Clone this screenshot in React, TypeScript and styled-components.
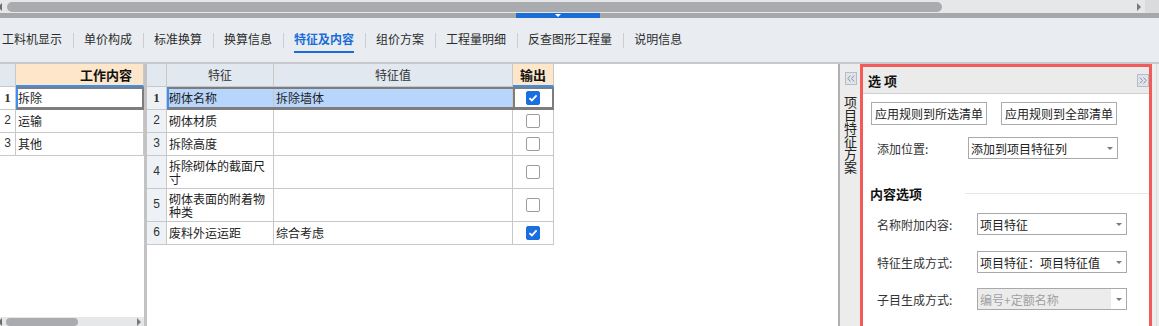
import React from 'react';
import styled, { createGlobalStyle, css } from 'styled-components';

const GlobalStyle = createGlobalStyle`
  html, body { margin: 0; padding: 0; background: #fff; }
  body {
    font-family: "Noto Sans CJK SC", "Noto Sans", sans-serif;
    color: #222;
  }
`;

const tabs = ['工料机显示', '单价构成', '标准换算', '换算信息', '特征及内容', '组价方案', '工程量明细', '反查图形工程量', '说明信息'];

const workRows = ['拆除', '运输', '其他'];

const features = [
  { name: '砌体名称', value: '拆除墙体', out: true, h: 23 },
  { name: '砌体材质', value: '', out: false, h: 23 },
  { name: '拆除高度', value: '', out: false, h: 23 },
  { name: '拆除砌体的截面尺寸', value: '', out: false, h: 33 },
  { name: '砌体表面的附着物种类', value: '', out: false, h: 33 },
  { name: '废料外运运距', value: '综合考虑', out: true, h: 23 },
];

const Screen = styled.div`
  width: 1159px;
  height: 326px;
  overflow: hidden;
  display: flex;
  flex-direction: column;
  background: #fff;
`;

/* ---------- top scroll + splitter ---------- */

const TopScroll = styled.div`
  height: 13px;
  flex: none;
  display: flex;
  align-items: center;
  background: #e6e7e9;
`;

const ArrowLeft = styled.span`
  width: 0;
  height: 0;
  margin-left: -2px;
  border-top: 4px solid transparent;
  border-bottom: 4px solid transparent;
  border-right: 4px solid #6c6c6c;
`;

const ArrowRight = styled.span`
  width: 0;
  height: 0;
  border-top: 4px solid transparent;
  border-bottom: 4px solid transparent;
  border-left: 4px solid #7a7a7a;
`;

const Thumb = styled.div<{ $w: number; $ml: number }>`
  width: ${p => p.$w}px;
  margin-left: ${p => p.$ml}px;
  height: 10px;
  border-radius: 5px;
  background: #a9abae;
`;

const Fill = styled.div`
  flex: 1;
`;

const Corner = styled.div`
  width: 14px;
  height: 100%;
  margin-left: 4px;
  background: #dadbdd;
`;

const Splitter = styled.div`
  height: 5px;
  flex: none;
  background: #a6a7a9;
  padding-left: 516px;
  display: flex;
`;

const Grip = styled.div`
  width: 84px;
  background: #1a6dd6;
  display: flex;
  justify-content: center;
  align-items: center;
`;

const GripTri = styled.span`
  width: 0;
  height: 0;
  border-left: 3px solid transparent;
  border-right: 3px solid transparent;
  border-top: 3px solid #fff;
`;

/* ---------- tabs ---------- */

const TabBar = styled.div`
  height: 44px;
  flex: none;
  background: #e9edf1;
  display: flex;
  align-items: flex-start;
  padding-left: 2px;
  border-bottom: 2px solid #c8c9cc;
`;

const Tab = styled.div<{ $first?: boolean }>`
  padding: 14px 11px 0 ${p => (p.$first ? 0 : 10)}px;
`;

const TabLabel = styled.span<{ $active?: boolean }>`
  display: block;
  font-size: 12px;
  line-height: 14px;
  padding-bottom: 5px;
  white-space: nowrap;
  color: ${p => (p.$active ? '#1a6dd6' : '#2b2b2b')};
  font-weight: ${p => (p.$active ? 600 : 400)};
  border-bottom: 2px solid ${p => (p.$active ? '#1a6dd6' : 'transparent')};
`;

const TabSep = styled.span`
  width: 1px;
  height: 15px;
  margin-top: 15px;
  background: #c9ced4;
`;

/* ---------- main area ---------- */

const Main = styled.div`
  flex: 1;
  display: flex;
  min-height: 0;
`;

const LeftPane = styled.div`
  width: 144px;
  flex: none;
  display: flex;
  flex-direction: column;
`;

const VDivider = styled.div<{ $w: number; $c: string }>`
  width: ${p => p.$w}px;
  flex: none;
  background: ${p => p.$c};
`;

const MidPane = styled.div`
  width: 691px;
  flex: none;
  display: flex;
  flex-direction: column;
`;

const Row = styled.div<{ $h: number }>`
  display: flex;
  height: ${p => p.$h}px;
  flex: none;
`;

const Group = styled.div<{ $selected?: boolean }>`
  display: flex;
  position: relative;
  ${p =>
    p.$selected &&
    css`
      &::after {
        content: '';
        position: absolute;
        inset: 0;
        border: 2px solid #7d7d7d;
        border-left-color: #3d8ff0;
        border-bottom-width: 3px;
        pointer-events: none;
      }
    `}
`;

const Cell = styled.div<{ $w: number; $bg?: string; $center?: boolean }>`
  box-sizing: border-box;
  width: ${p => p.$w}px;
  height: 100%;
  flex: none;
  display: flex;
  align-items: center;
  justify-content: ${p => (p.$center ? 'center' : 'flex-start')};
  padding: 0 2px;
  border-right: 1px solid #c8c8c8;
  border-bottom: 1px solid #c8c8c8;
  background: ${p => p.$bg || '#fff'};
  font-size: 12px;
  line-height: 13.5px;
  color: #222;
`;

const NumCell = styled(Cell)<{ $bold?: boolean }>`
  justify-content: center;
  padding: 0;
  font-family: ${p => (p.$bold ? '"Liberation Serif", serif' : '"Liberation Sans", sans-serif')};
  font-size: ${p => (p.$bold ? 13 : 12)}px;
  font-weight: ${p => (p.$bold ? 700 : 400)};
  color: #333;
`;

const HeadCell = styled(Cell)<{ $accent?: boolean; $right?: boolean }>`
  justify-content: ${p => (p.$right ? 'flex-end' : 'center')};
  padding: ${p => (p.$right ? '0 11px 0 0' : '0')};
  background: ${p => (p.$accent ? '#fde6c9' : '#e2e8ef')};
  font-size: ${p => (p.$accent ? 13 : 12)}px;
  font-weight: ${p => (p.$accent ? 700 : 400)};
  color: ${p => (p.$accent ? '#111' : '#333')};
  ${p => p.$accent && 'border-bottom: 2px solid #3d8ff0;'}
`;

const OutCell = styled(Cell)<{ $current?: boolean }>`
  justify-content: center;
  ${p => p.$current && 'box-shadow: inset 2px 0 0 #7d7d7d;'}
`;

const Check = styled.span<{ $on?: boolean }>`
  box-sizing: border-box;
  width: 14px;
  height: 14px;
  border-radius: 2px;
  display: flex;
  align-items: center;
  justify-content: center;
  background: ${p => (p.$on ? '#1a6ee0' : '#fff')};
  border: 1px solid ${p => (p.$on ? '#1a6ee0' : '#9c9c9c')};
`;

const HScroll = styled.div`
  height: 9px;
  flex: none;
  display: flex;
  align-items: center;
  background: #e6e7e9;
  padding-right: 3px;
`;

const SmallThumb = styled(Thumb)`
  height: 8px;
  border-radius: 4px;
`;

/* ---------- side strip + options panel ---------- */

const SideStrip = styled.div`
  width: 20px;
  flex: none;
  background: #ececec;
  display: flex;
  flex-direction: column;
  align-items: flex-start;
  padding: 8px 0 0 5px;
  box-sizing: border-box;
`;

const MiniBtn = styled.div`
  box-sizing: border-box;
  width: 12px;
  height: 13px;
  border: 1px solid #b4bcc8;
  background: #dfe4ea;
  display: flex;
  align-items: center;
  justify-content: center;
`;

const VerticalTitle = styled.div`
  writing-mode: vertical-rl;
  font-size: 13px;
  line-height: 13px;
  color: #222;
  margin-top: 11px;
  margin-left: -1px;
`;

const Panel = styled.div`
  width: 292px;
  flex: none;
  box-sizing: border-box;
  border: 3px solid #f35b5b;
  border-bottom: none;
  display: flex;
  flex-direction: column;
`;

const PanelHead = styled.div`
  height: 27px;
  flex: none;
  box-sizing: border-box;
  background: #ebebeb;
  border-bottom: 1px solid #cfcfcf;
  display: flex;
  align-items: center;
  padding: 0 0 0 5px;
`;

const PanelTitle = styled.span`
  font-size: 13px;
  font-weight: 700;
  color: #111;
  flex: 1;
`;

const PanelBody = styled.div`
  padding: 8px 0 0 8px;
  display: flex;
  flex-direction: column;
`;

const ButtonRow = styled.div`
  display: flex;
  gap: 14px;
`;

const Button = styled.div`
  box-sizing: border-box;
  width: 116px;
  height: 23px;
  border: 1px solid #ababab;
  background: #fff;
  font-size: 12px;
  display: flex;
  align-items: center;
  justify-content: center;
  color: #222;
`;

const FieldRow = styled.div<{ $mt: number; $label: number }>`
  display: flex;
  align-items: center;
  margin-top: ${p => p.$mt}px;
  padding-left: 6px;
  & > span:first-child {
    width: ${p => p.$label}px;
  }
`;

const Label = styled.span`
  font-size: 12px;
  color: #333;
  flex: none;
`;

const Select = styled.div<{ $disabled?: boolean }>`
  box-sizing: border-box;
  width: 150px;
  height: 22px;
  border: 1px solid #a9a9a9;
  background: #fff;
  display: flex;
  align-items: center;
  font-size: 12px;
  color: ${p => (p.$disabled ? '#a0a0a0' : '#222')};
`;

const SelectText = styled.span<{ $disabled?: boolean }>`
  flex: 1;
  height: 100%;
  display: flex;
  align-items: center;
  padding-left: 2px;
  background: ${p => (p.$disabled ? '#ececec' : 'transparent')};
`;

const Caret = styled.span`
  width: 15px;
  display: flex;
  justify-content: center;
  &::before {
    content: '';
    border-left: 3px solid transparent;
    border-right: 3px solid transparent;
    border-top: 3px solid #7b7b7b;
  }
`;

const SectionHead = styled.div`
  display: flex;
  align-items: center;
  margin-top: 26px;
  margin-left: -1px;
  height: 16px;
`;

const SectionTitle = styled.span`
  font-size: 13px;
  font-weight: 700;
  color: #111;
`;

const SectionLine = styled.span`
  margin-left: auto;
  width: 184px;
  height: 1px;
  background: #e6e6e6;
`;

const Gutter = styled.div`
  flex: 1;
  background: #ececec;
  border-left: 4px solid #eeeeee;
  box-shadow: inset 1px 0 0 #dcdcdc;
`;

const Chevrons = ({ dir }: { dir: 'left' | 'right' }) => (
  <svg width="8" height="7" viewBox="0 0 8 7">
    {dir === 'left' ? (
      <path d="M3.5 0.5 L0.8 3.5 L3.5 6.5 M7.2 0.5 L4.5 3.5 L7.2 6.5" stroke="#8a94a3" strokeWidth="1" fill="none" />
    ) : (
      <path d="M0.8 0.5 L3.5 3.5 L0.8 6.5 M4.5 0.5 L7.2 3.5 L4.5 6.5" stroke="#8a94a3" strokeWidth="1" fill="none" />
    )}
  </svg>
);

const Tick = () => (
  <svg width="10" height="8" viewBox="0 0 10 8">
    <path d="M1.4 4.1 L3.9 6.4 L8.6 1.4" stroke="#fff" strokeWidth="1.8" fill="none" />
  </svg>
);

const Dropdown = ({ text, disabled }: { text: string; disabled?: boolean }) => (
  <Select $disabled={disabled}>
    <SelectText $disabled={disabled}>{text}</SelectText>
    <Caret />
  </Select>
);

const App = () => (
  <Screen>
    <GlobalStyle />
    <TopScroll>
      <ArrowLeft />
      <Thumb $w={935} $ml={5} />
      <Fill />
      <ArrowRight />
      <Corner />
    </TopScroll>
    <Splitter>
      <Grip>
        <GripTri />
      </Grip>
    </Splitter>

    <TabBar>
      {tabs.map((t, i) => (
        <React.Fragment key={t}>
          {i > 0 && <TabSep />}
          <Tab $first={i === 0}>
            <TabLabel $active={i === 4}>{t}</TabLabel>
          </Tab>
        </React.Fragment>
      ))}
    </TabBar>

    <Main>
      <LeftPane>
        <Row $h={23}>
          <HeadCell $w={16} />
          <HeadCell $w={128} $accent $right>
            工作内容
          </HeadCell>
        </Row>
        {workRows.map((w, i) => (
          <Row $h={23} key={w}>
            <NumCell $w={16} $bold={i === 0}>
              {i + 1}
            </NumCell>
            <Group $selected={i === 0}>
              <Cell $w={128}>{w}</Cell>
            </Group>
          </Row>
        ))}
        <Fill />
        <HScroll>
          <ArrowLeft />
          <SmallThumb $w={72} $ml={4} />
          <Fill />
          <ArrowRight />
        </HScroll>
      </LeftPane>

      <VDivider $w={3} $c="#c3c3c3" />

      <MidPane>
        <Row $h={23}>
          <HeadCell $w={20} />
          <HeadCell $w={107}>特征</HeadCell>
          <HeadCell $w={239}>特征值</HeadCell>
          <HeadCell $w={41} $accent>
            输出
          </HeadCell>
        </Row>
        {features.map((f, i) => {
          const sel = i === 0;
          return (
            <Row $h={f.h} key={f.name}>
              <NumCell $w={20} $bold={sel} $bg="#eef1f5">
                {i + 1}
              </NumCell>
              <Group $selected={sel}>
                <Cell $w={107} $bg={sel ? '#b8d6fb' : undefined}>
                  {f.name}
                </Cell>
                <Cell $w={239} $bg={sel ? '#b8d6fb' : undefined}>
                  {f.value}
                </Cell>
                <OutCell $w={41} $current={sel}>
                  <Check $on={f.out}>{f.out && <Tick />}</Check>
                </OutCell>
              </Group>
            </Row>
          );
        })}
      </MidPane>

      <VDivider $w={2} $c="#b0b0b0" />

      <SideStrip>
        <MiniBtn>
          <Chevrons dir="left" />
        </MiniBtn>
        <VerticalTitle>项目特征方案</VerticalTitle>
      </SideStrip>

      <Panel>
        <PanelHead>
          <PanelTitle>选 项</PanelTitle>
          <MiniBtn>
            <Chevrons dir="right" />
          </MiniBtn>
        </PanelHead>
        <PanelBody>
          <ButtonRow>
            <Button>应用规则到所选清单</Button>
            <Button>应用规则到全部清单</Button>
          </ButtonRow>
          <FieldRow $mt={12} $label={91}>
            <Label>添加位置:</Label>
            <Dropdown text="添加到项目特征列" />
          </FieldRow>
          <SectionHead>
            <SectionTitle>内容选项</SectionTitle>
            <SectionLine />
          </SectionHead>
          <FieldRow $mt={12} $label={100}>
            <Label>名称附加内容:</Label>
            <Dropdown text="项目特征" />
          </FieldRow>
          <FieldRow $mt={16} $label={100}>
            <Label>特征生成方式:</Label>
            <Dropdown text="项目特征：项目特征值" />
          </FieldRow>
          <FieldRow $mt={15} $label={100}>
            <Label>子目生成方式:</Label>
            <Dropdown text="编号+定额名称" disabled />
          </FieldRow>
        </PanelBody>
      </Panel>

      <Gutter />
    </Main>
  </Screen>
);

export default App;
